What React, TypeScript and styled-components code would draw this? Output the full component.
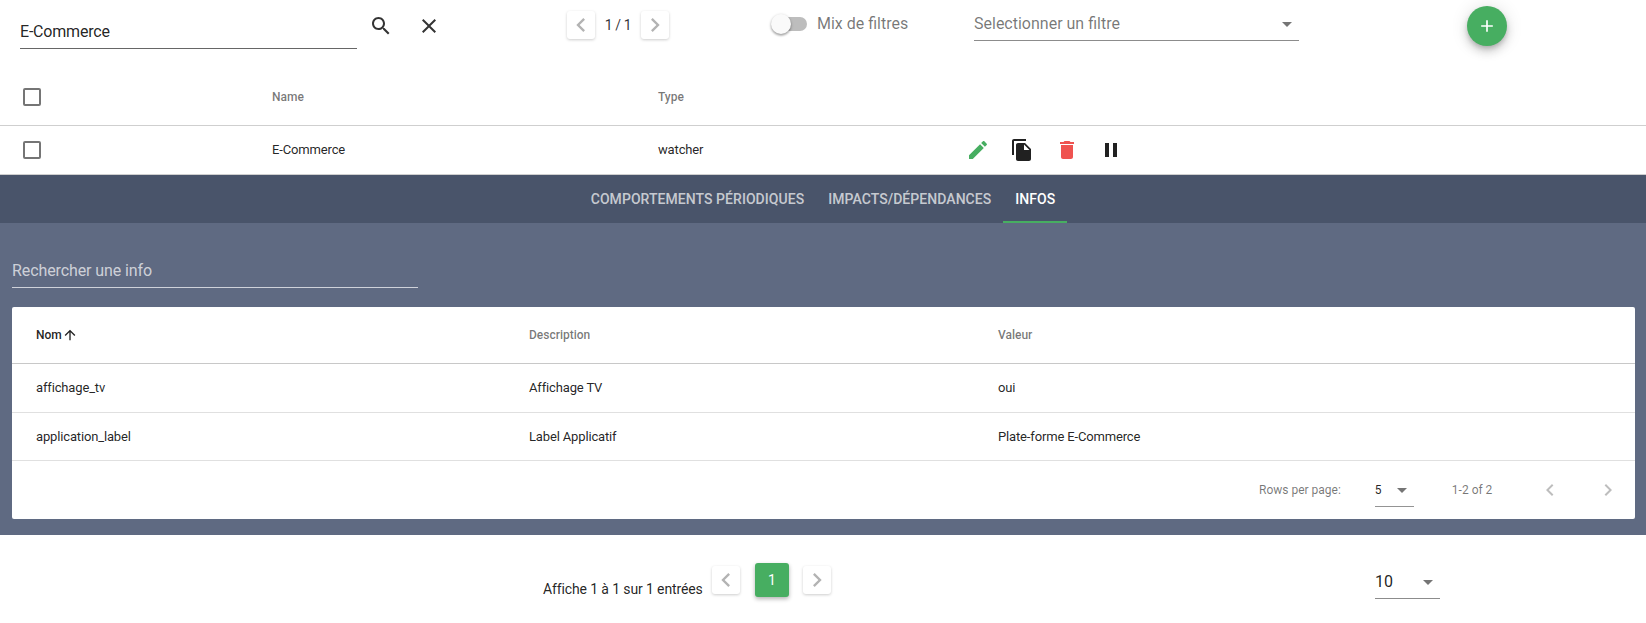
import React from 'react';
import styled, { createGlobalStyle } from 'styled-components';

const GlobalStyle = createGlobalStyle`
  html, body { margin: 0; padding: 0; background: #fff; }
  body { font-family: Roboto, "Liberation Sans", sans-serif; color: rgba(0,0,0,0.87); }
`;

const GREEN = '#47ae61';

const Page = styled.div`
  width: 1646px;
  height: 623px;
  overflow: hidden;
`;

const Toolbar = styled.div`
  display: grid;
  grid-template-columns: 555px 222px 197px 493px 40px;
  height: 70px;
  align-items: start;
`;

const SearchZone = styled.div`
  display: flex;
  padding: 9px 0 0 20px;
`;

const TextField = styled.div<{ $width: number }>`
  width: ${p => p.$width}px;
  height: 40px;
  box-sizing: border-box;
  border-bottom: 1px solid rgba(0,0,0,0.6);
  padding-top: 13px;
  font-size: 16px;
  line-height: 19px;
  letter-spacing: -0.2px;
`;

const IconSlot = styled.div<{ $left: number }>`
  width: 24px;
  height: 24px;
  margin-left: ${p => p.$left}px;
  margin-top: 5px;
  color: rgba(0,0,0,0.8);
`;

const Pager = styled.div`
  display: flex;
  align-items: center;
  height: 28px;
  padding: 11px 0 0 12px;
`;

const SquareButton = styled.div`
  width: 28px;
  height: 28px;
  border-radius: 3px;
  background: #fff;
  box-shadow: 0 1px 3px rgba(0,0,0,0.2);
  display: flex;
  align-items: center;
  justify-content: center;
  color: #b3b3b3;
`;

const PagerLabel = styled.div`
  width: 46px;
  text-align: center;
  font-size: 14px;
  letter-spacing: -0.4px;
  color: rgba(0,0,0,0.8);
`;

const SwitchZone = styled.div`
  display: flex;
  align-items: center;
  padding: 13px 0 0 0;
  height: 22px;
`;

const Track = styled.div`
  position: relative;
  width: 35px;
  height: 14px;
  border-radius: 7px;
  background: #bdbdbd;
  margin-left: -5px;
`;

const Thumb = styled.div`
  position: absolute;
  left: -1px;
  top: -3px;
  width: 20px;
  height: 20px;
  border-radius: 50%;
  background: #fafafa;
  box-shadow: 0 1px 3px rgba(0,0,0,0.3), 0 2px 2px rgba(0,0,0,0.16);
`;

const SwitchLabel = styled.div`
  margin: -1px 0 0 10px;
  font-size: 16px;
  color: rgba(0,0,0,0.54);
`;

const FilterSelect = styled.div`
  width: 325px;
  height: 41px;
  box-sizing: border-box;
  border-bottom: 1px solid rgba(0,0,0,0.45);
  display: flex;
  justify-content: space-between;
  padding: 14px 7px 0 0;
  font-size: 16px;
  line-height: 19px;
  color: rgba(0,0,0,0.54);
`;

const Caret = styled.span<{ $top: number }>`
  display: block;
  width: 0;
  height: 0;
  border-left: 5px solid transparent;
  border-right: 5px solid transparent;
  border-top: 5px solid rgba(0,0,0,0.54);
  margin-top: ${p => p.$top}px;
`;

const Fab = styled.div`
  width: 40px;
  height: 40px;
  margin-top: 6px;
  border-radius: 50%;
  background: ${GREEN};
  color: #fff;
  display: flex;
  align-items: center;
  justify-content: center;
  box-shadow: 0 3px 5px -1px rgba(0,0,0,0.2), 0 6px 10px 0 rgba(0,0,0,0.14), 0 1px 18px 0 rgba(0,0,0,0.12);
`;

const ListRow = styled.div<{ $height: number; $head?: boolean }>`
  display: grid;
  grid-template-columns: 272px 386px 308px 1fr;
  height: ${p => p.$height}px;
  align-items: center;
  font-weight: ${p => (p.$head ? 500 : 400)};
  font-size: ${p => (p.$head ? 12 : 13)}px;
  letter-spacing: ${p => (p.$head ? 0 : -0.15)}px;
  color: ${p => (p.$head ? 'rgba(0,0,0,0.54)' : 'rgba(0,0,0,0.87)')};
  border-bottom: 1px solid #cfcfcf;
  box-sizing: border-box;
  padding-bottom: 1px;
`;

const CheckBox = styled.div`
  width: 18px;
  height: 18px;
  box-sizing: border-box;
  margin-left: 23px;
  border: 2px solid rgba(0,0,0,0.54);
  border-radius: 2px;
`;

const RowActions = styled.div`
  display: flex;
  gap: 20.3px;
`;

const ActionIcon = styled.svg<{ $color: string }>`
  width: 24px;
  height: 24px;
  fill: ${p => p.$color};
  display: block;
`;

const Panel = styled.div`
  background: #5f6a82;
  height: 360px;
`;

const TabBar = styled.div`
  height: 48px;
  background: #49546a;
  display: flex;
  justify-content: center;
`;

const Tab = styled.div<{ $active?: boolean }>`
  height: 48px;
  box-sizing: border-box;
  padding: 1px 12px 0;
  display: flex;
  align-items: center;
  font-size: 14px;
  font-weight: 500;
  letter-spacing: 0.05px;
  color: ${p => (p.$active ? '#fff' : 'rgba(255,255,255,0.7)')};
  border-bottom: 2px solid ${p => (p.$active ? GREEN : 'transparent')};
`;

const PanelBody = styled.div`
  padding: 28px 11px 0 12px;
`;

const InfoSearch = styled.div`
  width: 406px;
  height: 37px;
  box-sizing: border-box;
  border-bottom: 1px solid rgba(255,255,255,0.7);
  padding-top: 10px;
  font-size: 16px;
  line-height: 19px;
  letter-spacing: -0.1px;
  color: rgba(255,255,255,0.7);
`;

const Card = styled.div`
  margin-top: 19px;
  background: #fff;
  border-radius: 2px;
`;

const InfoRow = styled.div<{ $height: number; $head?: boolean }>`
  display: grid;
  grid-template-columns: 493px 469px 1fr;
  height: ${p => p.$height}px;
  box-sizing: border-box;
  padding: 0 0 1px 24px;
  align-items: center;
  font-size: 13px;
  letter-spacing: -0.15px;
  color: rgba(0,0,0,0.87);
  border-bottom: 1px solid ${p => (p.$head ? '#c8c8c8' : '#e0e0e0')};
`;

const HeadCell = styled.div<{ $sorted?: boolean }>`
  display: flex;
  align-items: center;
  font-size: 12px;
  font-weight: 500;
  letter-spacing: 0;
  color: ${p => (p.$sorted ? 'rgba(0,0,0,0.87)' : 'rgba(0,0,0,0.54)')};
`;

const TableFooter = styled.div`
  height: 58px;
  display: flex;
  align-items: center;
  font-size: 12px;
  color: rgba(0,0,0,0.54);
  padding-left: 1247px;
`;

const RowsSelect = styled.div`
  width: 39px;
  height: 33px;
  box-sizing: border-box;
  margin-left: 34px;
  margin-top: 1px;
  border-bottom: 1px solid rgba(0,0,0,0.42);
  display: flex;
  justify-content: space-between;
  padding: 9px 7px 0 0;
  color: rgba(0,0,0,0.87);
  line-height: 14px;
`;

const RangeLabel = styled.div`
  margin-left: 38px;
`;

const FooterArrow = styled.div<{ $left: number }>`
  margin-left: ${p => p.$left}px;
  height: 24px;
  color: rgba(0,0,0,0.26);
`;

const BottomBar = styled.div`
  position: relative;
  display: flex;
  padding-left: 543px;
  height: 88px;
`;

const EntriesLabel = styled.div`
  font-size: 14px;
  line-height: 16px;
  letter-spacing: -0.12px;
  margin-top: 46px;
  width: 169px;
  color: rgba(0,0,0,0.87);
`;

const BottomButtons = styled.div`
  display: flex;
  align-items: center;
  height: 34px;
  margin-top: 28px;
  column-gap: 15px;
`;

const PageNumber = styled.div`
  width: 34px;
  height: 34px;
  margin-right: -1px;
  border-radius: 3px;
  background: ${GREEN};
  color: #fff;
  display: flex;
  align-items: center;
  justify-content: center;
  font-size: 14px;
  box-shadow: 0 2px 4px rgba(0,0,0,0.3);
`;

const PageSizeSelect = styled.div`
  position: absolute;
  left: 1375px;
  top: 31px;
  width: 65px;
  height: 33px;
  box-sizing: border-box;
  border-bottom: 1px solid rgba(0,0,0,0.45);
  display: flex;
  justify-content: space-between;
  padding: 6px 7px 0 0;
  font-size: 16px;
  line-height: 19px;
  color: rgba(0,0,0,0.87);
`;

const Chevron = ({ dir, size = 24 }: { dir: 'left' | 'right'; size?: number }) => (
  <svg width={size} height={size} viewBox="0 0 24 24" fill="currentColor" style={{ display: 'block' }}>
    <path d={dir === 'left' ? 'M15.41 7.41 14 6l-6 6 6 6 1.41-1.41L10.83 12z' : 'M10 6 8.59 7.41 13.17 12l-4.58 4.59L10 18l6-6z'} />
  </svg>
);

const SearchIcon = () => (
  <svg width="24" height="24" viewBox="0 0 24 24" fill="currentColor">
    <path d="M15.5 14h-.79l-.28-.27C15.41 12.59 16 11.11 16 9.5 16 5.91 13.09 3 9.5 3S3 5.91 3 9.5 5.91 16 9.5 16c1.61 0 3.09-.59 4.23-1.57l.27.28v.79l5 4.99L20.49 19l-4.99-5zm-6 0C7.01 14 5 11.99 5 9.5S7.01 5 9.5 5 14 7.01 14 9.5 11.99 14 9.5 14z" />
  </svg>
);

const CloseIcon = () => (
  <svg width="24" height="24" viewBox="0 0 24 24" fill="currentColor">
    <path d="M19 6.41 17.59 5 12 10.59 6.41 5 5 6.41 10.59 12 5 17.59 6.41 19 12 13.41 17.59 19 19 17.59 13.41 12z" />
  </svg>
);

const infos = [
  { name: 'affichage_tv', description: 'Affichage TV', value: 'oui', height: 49 },
  { name: 'application_label', description: 'Label Applicatif', value: 'Plate-forme E-Commerce', height: 48 },
];

const App = () => {
  return (
    <Page>
      <GlobalStyle />
      <Toolbar>
        <SearchZone>
          <TextField $width={337}>E-Commerce</TextField>
          <IconSlot $left={12}><SearchIcon /></IconSlot>
          <IconSlot $left={24}><CloseIcon /></IconSlot>
        </SearchZone>
        <Pager>
          <SquareButton><Chevron dir="left" size={28} /></SquareButton>
          <PagerLabel>1 / 1</PagerLabel>
          <SquareButton><Chevron dir="right" size={28} /></SquareButton>
        </Pager>
        <SwitchZone>
          <Track><Thumb /></Track>
          <SwitchLabel>Mix de filtres</SwitchLabel>
        </SwitchZone>
        <FilterSelect>
          Selectionner un filtre
          <Caret $top={8} />
        </FilterSelect>
        <Fab>
          <svg width="20" height="20" viewBox="0 0 24 24" fill="currentColor">
            <path d="M19 13h-6v6h-2v-6H5v-2h6V5h2v6h6v2z" />
          </svg>
        </Fab>
      </Toolbar>

      <ListRow $height={56} $head>
        <CheckBox />
        <div>Name</div>
        <div>Type</div>
        <div />
      </ListRow>
      <ListRow $height={49}>
        <CheckBox />
        <div>E-Commerce</div>
        <div>watcher</div>
        <RowActions>
          <ActionIcon $color={GREEN} viewBox="0 0 24 24">
            <path d="M3 17.25V21h3.75L17.81 9.94l-3.75-3.75L3 17.25zM20.71 7.04c.39-.39.39-1.02 0-1.41l-2.34-2.34c-.39-.39-1.02-.39-1.41 0l-1.83 1.83 3.75 3.75 1.83-1.83z" />
          </ActionIcon>
          <ActionIcon $color="#212121" viewBox="0 0 24 24">
            <path d="M16 1H4c-1.1 0-2 .9-2 2v14h2V3h12V1zm-1 4 6 6v10c0 1.1-.9 2-2 2H7.99C6.89 23 6 22.1 6 21l.01-14c0-1.1.89-2 1.99-2h7zm-1 7h5.5L14 6.5V12z" />
          </ActionIcon>
          <ActionIcon $color="#ef5350" viewBox="0 0 24 24">
            <path d="M6 19c0 1.1.9 2 2 2h8c1.1 0 2-.9 2-2V7H6v12zM19 4h-3.5l-1-1h-5l-1 1H5v2h14V4z" />
          </ActionIcon>
          <ActionIcon $color="#212121" viewBox="0 0 24 24">
            <path d="M6 19h4V5H6v14zm8-14v14h4V5h-4z" />
          </ActionIcon>
        </RowActions>
      </ListRow>

      <Panel>
        <TabBar>
          <Tab>COMPORTEMENTS PÉRIODIQUES</Tab>
          <Tab>IMPACTS/DÉPENDANCES</Tab>
          <Tab $active>INFOS</Tab>
        </TabBar>
        <PanelBody>
          <InfoSearch>Rechercher une info</InfoSearch>
          <Card>
            <InfoRow $height={57} $head>
              <HeadCell $sorted>
                Nom
                <svg width="16" height="16" viewBox="0 0 24 24" fill="currentColor">
                  <path d="M4 12l1.41 1.41L11 7.83V20h2V7.83l5.58 5.59L20 12l-8-8-8 8z" />
                </svg>
              </HeadCell>
              <HeadCell>Description</HeadCell>
              <HeadCell>Valeur</HeadCell>
            </InfoRow>
            {infos.map(info => (
              <InfoRow key={info.name} $height={info.height}>
                <div>{info.name}</div>
                <div>{info.description}</div>
                <div>{info.value}</div>
              </InfoRow>
            ))}
            <TableFooter>
              Rows per page:
              <RowsSelect>5<Caret $top={5} /></RowsSelect>
              <RangeLabel>1-2 of 2</RangeLabel>
              <FooterArrow $left={46}><Chevron dir="left" /></FooterArrow>
              <FooterArrow $left={34}><Chevron dir="right" /></FooterArrow>
            </TableFooter>
          </Card>
        </PanelBody>
      </Panel>

      <BottomBar>
        <EntriesLabel>Affiche 1 à 1 sur 1 entrées</EntriesLabel>
        <BottomButtons>
          <SquareButton><Chevron dir="left" size={28} /></SquareButton>
          <PageNumber>1</PageNumber>
          <SquareButton><Chevron dir="right" size={28} /></SquareButton>
        </BottomButtons>
        <PageSizeSelect>10<Caret $top={8} /></PageSizeSelect>
      </BottomBar>
    </Page>
  );
};

export default App;
